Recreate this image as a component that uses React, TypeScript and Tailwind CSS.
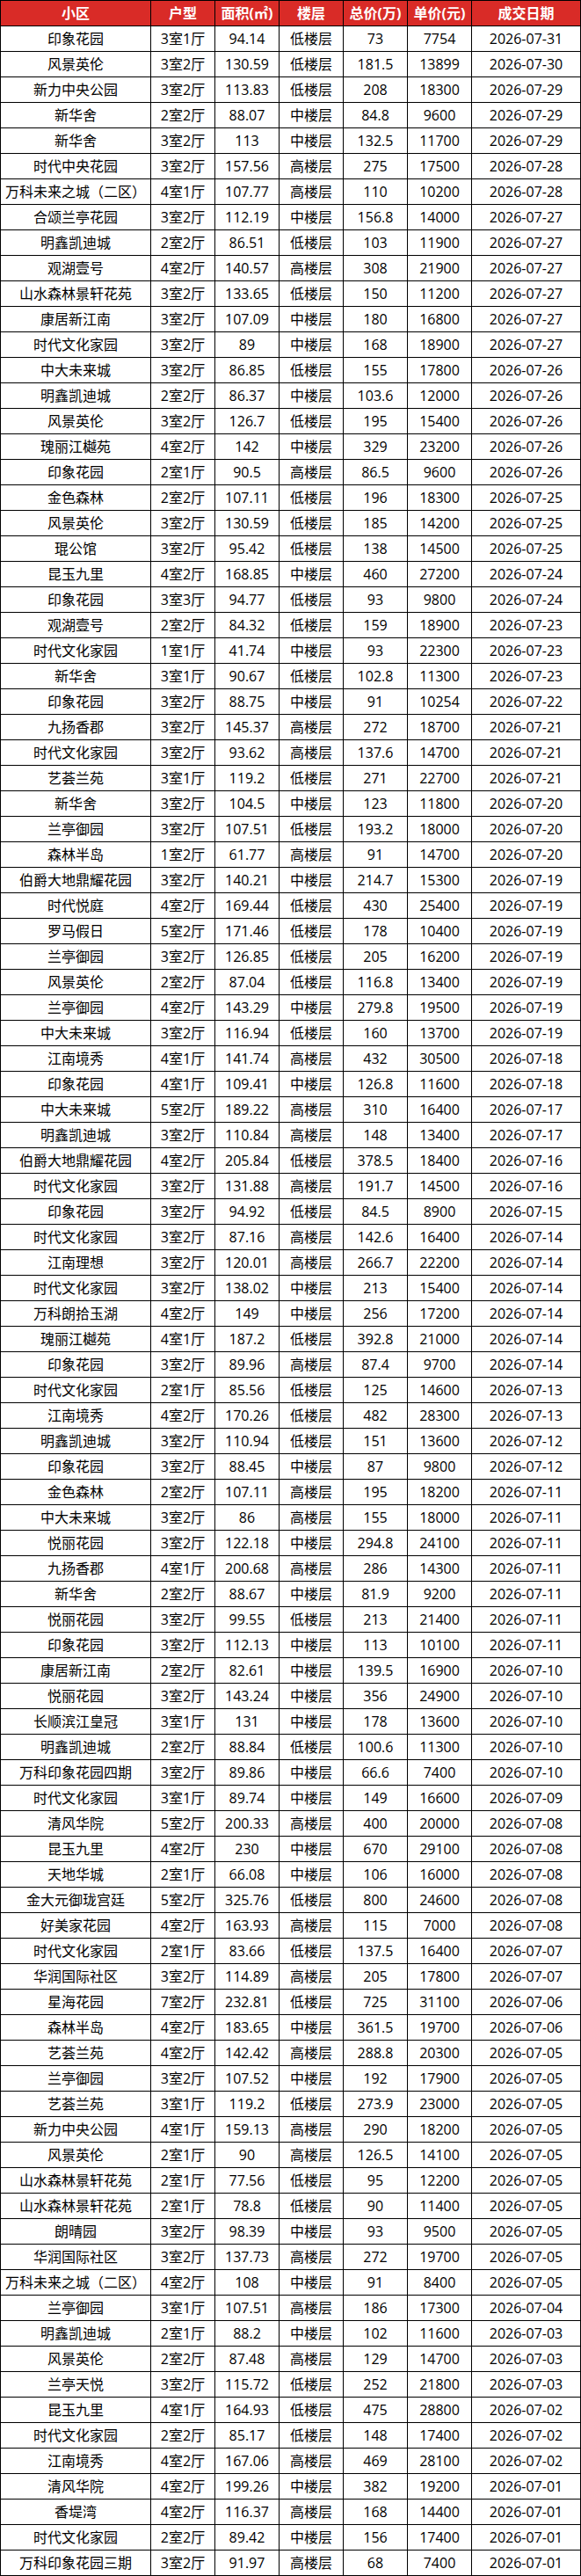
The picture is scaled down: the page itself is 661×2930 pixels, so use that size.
import React from 'react';

type Row = [string, string, string, string, string, string, string];

const rows: Row[] = [
  ['印象花园', '3室1厅', '94.14', '低楼层', '73', '7754', '2026-07-31'],
  ['风景英伦', '3室2厅', '130.59', '低楼层', '181.5', '13899', '2026-07-30'],
  ['新力中央公园', '3室2厅', '113.83', '低楼层', '208', '18300', '2026-07-29'],
  ['新华舍', '2室2厅', '88.07', '中楼层', '84.8', '9600', '2026-07-29'],
  ['新华舍', '3室2厅', '113', '中楼层', '132.5', '11700', '2026-07-29'],
  ['时代中央花园', '3室2厅', '157.56', '高楼层', '275', '17500', '2026-07-28'],
  ['万科未来之城（二区）', '4室1厅', '107.77', '高楼层', '110', '10200', '2026-07-28'],
  ['合颂兰亭花园', '3室2厅', '112.19', '中楼层', '156.8', '14000', '2026-07-27'],
  ['明鑫凯迪城', '2室2厅', '86.51', '低楼层', '103', '11900', '2026-07-27'],
  ['观湖壹号', '4室2厅', '140.57', '高楼层', '308', '21900', '2026-07-27'],
  ['山水森林景轩花苑', '3室2厅', '133.65', '低楼层', '150', '11200', '2026-07-27'],
  ['康居新江南', '3室2厅', '107.09', '中楼层', '180', '16800', '2026-07-27'],
  ['时代文化家园', '3室2厅', '89', '中楼层', '168', '18900', '2026-07-27'],
  ['中大未来城', '3室2厅', '86.85', '低楼层', '155', '17800', '2026-07-26'],
  ['明鑫凯迪城', '2室2厅', '86.37', '中楼层', '103.6', '12000', '2026-07-26'],
  ['风景英伦', '3室2厅', '126.7', '低楼层', '195', '15400', '2026-07-26'],
  ['瑰丽江樾苑', '4室2厅', '142', '中楼层', '329', '23200', '2026-07-26'],
  ['印象花园', '2室1厅', '90.5', '高楼层', '86.5', '9600', '2026-07-26'],
  ['金色森林', '2室2厅', '107.11', '低楼层', '196', '18300', '2026-07-25'],
  ['风景英伦', '3室2厅', '130.59', '低楼层', '185', '14200', '2026-07-25'],
  ['琨公馆', '3室2厅', '95.42', '低楼层', '138', '14500', '2026-07-25'],
  ['昆玉九里', '4室2厅', '168.85', '中楼层', '460', '27200', '2026-07-24'],
  ['印象花园', '3室3厅', '94.77', '低楼层', '93', '9800', '2026-07-24'],
  ['观湖壹号', '2室2厅', '84.32', '低楼层', '159', '18900', '2026-07-23'],
  ['时代文化家园', '1室1厅', '41.74', '中楼层', '93', '22300', '2026-07-23'],
  ['新华舍', '3室1厅', '90.67', '低楼层', '102.8', '11300', '2026-07-23'],
  ['印象花园', '3室2厅', '88.75', '中楼层', '91', '10254', '2026-07-22'],
  ['九扬香郡', '3室2厅', '145.37', '高楼层', '272', '18700', '2026-07-21'],
  ['时代文化家园', '3室2厅', '93.62', '高楼层', '137.6', '14700', '2026-07-21'],
  ['艺荟兰苑', '3室1厅', '119.2', '低楼层', '271', '22700', '2026-07-21'],
  ['新华舍', '3室2厅', '104.5', '中楼层', '123', '11800', '2026-07-20'],
  ['兰亭御园', '3室2厅', '107.51', '低楼层', '193.2', '18000', '2026-07-20'],
  ['森林半岛', '1室2厅', '61.77', '高楼层', '91', '14700', '2026-07-20'],
  ['伯爵大地鼎耀花园', '3室2厅', '140.21', '中楼层', '214.7', '15300', '2026-07-19'],
  ['时代悦庭', '4室2厅', '169.44', '低楼层', '430', '25400', '2026-07-19'],
  ['罗马假日', '5室2厅', '171.46', '低楼层', '178', '10400', '2026-07-19'],
  ['兰亭御园', '3室2厅', '126.85', '低楼层', '205', '16200', '2026-07-19'],
  ['风景英伦', '2室2厅', '87.04', '低楼层', '116.8', '13400', '2026-07-19'],
  ['兰亭御园', '4室2厅', '143.29', '中楼层', '279.8', '19500', '2026-07-19'],
  ['中大未来城', '3室2厅', '116.94', '低楼层', '160', '13700', '2026-07-19'],
  ['江南境秀', '4室1厅', '141.74', '高楼层', '432', '30500', '2026-07-18'],
  ['印象花园', '4室1厅', '109.41', '中楼层', '126.8', '11600', '2026-07-18'],
  ['中大未来城', '5室2厅', '189.22', '高楼层', '310', '16400', '2026-07-17'],
  ['明鑫凯迪城', '3室2厅', '110.84', '高楼层', '148', '13400', '2026-07-17'],
  ['伯爵大地鼎耀花园', '4室2厅', '205.84', '低楼层', '378.5', '18400', '2026-07-16'],
  ['时代文化家园', '3室2厅', '131.88', '高楼层', '191.7', '14500', '2026-07-16'],
  ['印象花园', '3室2厅', '94.92', '低楼层', '84.5', '8900', '2026-07-15'],
  ['时代文化家园', '3室2厅', '87.16', '高楼层', '142.6', '16400', '2026-07-14'],
  ['江南理想', '3室2厅', '120.01', '高楼层', '266.7', '22200', '2026-07-14'],
  ['时代文化家园', '3室2厅', '138.02', '中楼层', '213', '15400', '2026-07-14'],
  ['万科朗拾玉湖', '4室2厅', '149', '中楼层', '256', '17200', '2026-07-14'],
  ['瑰丽江樾苑', '4室1厅', '187.2', '低楼层', '392.8', '21000', '2026-07-14'],
  ['印象花园', '3室2厅', '89.96', '高楼层', '87.4', '9700', '2026-07-14'],
  ['时代文化家园', '2室1厅', '85.56', '低楼层', '125', '14600', '2026-07-13'],
  ['江南境秀', '4室2厅', '170.26', '低楼层', '482', '28300', '2026-07-13'],
  ['明鑫凯迪城', '3室2厅', '110.94', '低楼层', '151', '13600', '2026-07-12'],
  ['印象花园', '3室2厅', '88.45', '中楼层', '87', '9800', '2026-07-12'],
  ['金色森林', '2室2厅', '107.11', '高楼层', '195', '18200', '2026-07-11'],
  ['中大未来城', '3室2厅', '86', '高楼层', '155', '18000', '2026-07-11'],
  ['悦丽花园', '3室2厅', '122.18', '中楼层', '294.8', '24100', '2026-07-11'],
  ['九扬香郡', '4室1厅', '200.68', '高楼层', '286', '14300', '2026-07-11'],
  ['新华舍', '2室2厅', '88.67', '中楼层', '81.9', '9200', '2026-07-11'],
  ['悦丽花园', '3室2厅', '99.55', '低楼层', '213', '21400', '2026-07-11'],
  ['印象花园', '3室2厅', '112.13', '中楼层', '113', '10100', '2026-07-11'],
  ['康居新江南', '2室2厅', '82.61', '中楼层', '139.5', '16900', '2026-07-10'],
  ['悦丽花园', '3室2厅', '143.24', '中楼层', '356', '24900', '2026-07-10'],
  ['长顺滨江皇冠', '3室1厅', '131', '中楼层', '178', '13600', '2026-07-10'],
  ['明鑫凯迪城', '2室2厅', '88.84', '低楼层', '100.6', '11300', '2026-07-10'],
  ['万科印象花园四期', '3室2厅', '89.86', '中楼层', '66.6', '7400', '2026-07-10'],
  ['时代文化家园', '3室1厅', '89.74', '中楼层', '149', '16600', '2026-07-09'],
  ['清风华院', '5室2厅', '200.33', '高楼层', '400', '20000', '2026-07-08'],
  ['昆玉九里', '4室2厅', '230', '中楼层', '670', '29100', '2026-07-08'],
  ['天地华城', '2室1厅', '66.08', '中楼层', '106', '16000', '2026-07-08'],
  ['金大元御珑宫廷', '5室2厅', '325.76', '低楼层', '800', '24600', '2026-07-08'],
  ['好美家花园', '4室2厅', '163.93', '高楼层', '115', '7000', '2026-07-08'],
  ['时代文化家园', '2室1厅', '83.66', '低楼层', '137.5', '16400', '2026-07-07'],
  ['华润国际社区', '3室2厅', '114.89', '高楼层', '205', '17800', '2026-07-07'],
  ['星海花园', '7室2厅', '232.81', '低楼层', '725', '31100', '2026-07-06'],
  ['森林半岛', '4室2厅', '183.65', '中楼层', '361.5', '19700', '2026-07-06'],
  ['艺荟兰苑', '4室2厅', '142.42', '高楼层', '288.8', '20300', '2026-07-05'],
  ['兰亭御园', '3室2厅', '107.52', '中楼层', '192', '17900', '2026-07-05'],
  ['艺荟兰苑', '3室1厅', '119.2', '低楼层', '273.9', '23000', '2026-07-05'],
  ['新力中央公园', '4室1厅', '159.13', '高楼层', '290', '18200', '2026-07-05'],
  ['风景英伦', '2室1厅', '90', '高楼层', '126.5', '14100', '2026-07-05'],
  ['山水森林景轩花苑', '2室1厅', '77.56', '低楼层', '95', '12200', '2026-07-05'],
  ['山水森林景轩花苑', '2室1厅', '78.8', '低楼层', '90', '11400', '2026-07-05'],
  ['朗晴园', '3室2厅', '98.39', '中楼层', '93', '9500', '2026-07-05'],
  ['华润国际社区', '3室2厅', '137.73', '高楼层', '272', '19700', '2026-07-05'],
  ['万科未来之城（二区）', '4室2厅', '108', '中楼层', '91', '8400', '2026-07-05'],
  ['兰亭御园', '3室1厅', '107.51', '高楼层', '186', '17300', '2026-07-04'],
  ['明鑫凯迪城', '2室1厅', '88.2', '中楼层', '102', '11600', '2026-07-03'],
  ['风景英伦', '2室2厅', '87.48', '高楼层', '129', '14700', '2026-07-03'],
  ['兰亭天悦', '3室2厅', '115.72', '低楼层', '252', '21800', '2026-07-03'],
  ['昆玉九里', '4室1厅', '164.93', '低楼层', '475', '28800', '2026-07-02'],
  ['时代文化家园', '2室2厅', '85.17', '低楼层', '148', '17400', '2026-07-02'],
  ['江南境秀', '4室2厅', '167.06', '高楼层', '469', '28100', '2026-07-02'],
  ['清风华院', '4室2厅', '199.26', '中楼层', '382', '19200', '2026-07-01'],
  ['香堤湾', '4室2厅', '116.37', '高楼层', '168', '14400', '2026-07-01'],
  ['时代文化家园', '2室2厅', '89.42', '中楼层', '156', '17400', '2026-07-01'],
  ['万科印象花园三期', '3室2厅', '91.97', '高楼层', '68', '7400', '2026-07-01'],
];

const headers = ['小区', '户型', '面积(㎡)', '楼层', '总价(万)', '单价(元)', '成交日期'];

const cell = 'h-[29px] border-r border-b border-black flex items-center justify-center whitespace-nowrap overflow-hidden';

export default function App() {
  return (
    <div className="w-[661px] bg-white font-['Open_Sans','Noto_Sans_CJK_SC',sans-serif] text-[16px] text-black">
      <div className="grid grid-cols-[171px_73px_73px_73px_73px_73px_124px] border-l border-t border-black">
        {headers.map((h) => (
          <div key={h} className={`${cell} bg-[#d92b27] text-white font-bold`}>
            {h}
          </div>
        ))}
        {rows.map((r, i) =>
          r.map((v, j) => (
            <div key={`${i}-${j}`} className={cell}>
              {v}
            </div>
          ))
        )}
      </div>
    </div>
  );
}
